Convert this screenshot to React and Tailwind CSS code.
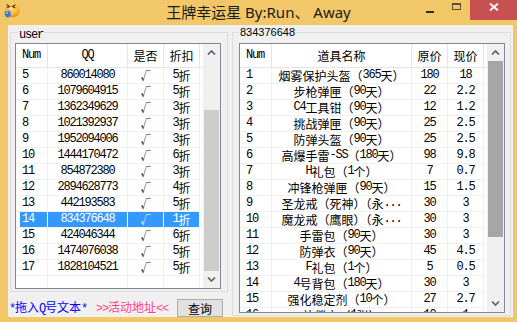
import React from "react";

function Txt({ s }) {
  const parts = s.match(/[\x00-\x7f]+|[^\x00-\x7f]+/g) || [];
  return (
    <>
      {parts.map((p, i) =>
        /^[\x00-\x7f]/.test(p) ? (
          <span key={i} className="font-['Liberation_Mono',monospace] text-[12px] tracking-[-1.2px]">
            {p}
          </span>
        ) : (
          <span key={i} className="font-['Noto_Sans_CJK_SC',sans-serif] text-[12px]">
            {p}
          </span>
        )
      )}
    </>
  );
}

const leftRows = [
  ["5", "860014080", "5折"],
  ["6", "1079604915", "5折"],
  ["7", "1362349629", "3折"],
  ["8", "1021392937", "3折"],
  ["9", "1952094006", "3折"],
  ["10", "1444170472", "6折"],
  ["11", "854872380", "3折"],
  ["12", "2894628773", "4折"],
  ["13", "442193583", "5折"],
  ["14", "834376648", "1折"],
  ["15", "424046344", "6折"],
  ["16", "1474076038", "5折"],
  ["17", "1828104521", "5折"],
];

const rightRows = [
  ["1", "烟雾保护头盔（365天）", "180", "18"],
  ["2", "步枪弹匣（90天）", "22", "2.2"],
  ["3", "C4工具钳（90天）", "12", "1.2"],
  ["4", "挑战弹匣（90天）", "25", "2.5"],
  ["5", "防弹头盔（90天）", "25", "2.5"],
  ["6", "高爆手雷-SS（180天）", "98", "9.8"],
  ["7", "H礼包（1个）", "7", "0.7"],
  ["8", "冲锋枪弹匣（90天）", "15", "1.5"],
  ["9", "圣龙戒（死神）（永...", "30", "3"],
  ["10", "魔龙戒（鹰眼）（永...", "30", "3"],
  ["11", "手雷包（90天）", "30", "3"],
  ["12", "防弹衣（90天）", "45", "4.5"],
  ["13", "F礼包（1个）", "5", "0.5"],
  ["14", "4号背包（180天）", "30", "3"],
  ["15", "强化稳定剂（10个）", "27", "2.7"],
  ["16", "补偿卡（1张）", "10", "1"],
];

function Up() {
  return (
    <svg width="9" height="5" viewBox="0 0 9 5">
      <polyline points="1,4.5 4.5,1 8,4.5" fill="none" stroke="#606060" strokeWidth="1.7" />
    </svg>
  );
}
function Down() {
  return (
    <svg width="9" height="5" viewBox="0 0 9 5">
      <polyline points="1,0.5 4.5,4 8,0.5" fill="none" stroke="#606060" strokeWidth="1.7" />
    </svg>
  );
}

function Icon() {
  return (
    <svg width="17" height="17" viewBox="0 0 17 17">
      <defs>
        <radialGradient id="face" cx="45%" cy="35%" r="65%">
          <stop offset="0" stopColor="#ffe58a" />
          <stop offset="0.65" stopColor="#f8b93c" />
          <stop offset="1" stopColor="#e08a1c" />
        </radialGradient>
      </defs>
      <circle cx="9" cy="9" r="7.6" fill="url(#face)" />
      <path d="M3.5 3.8 L6.6 5.4 L3.8 6.9" stroke="#5a3a12" strokeWidth="1.2" fill="none" />
      <path d="M12.4 3.8 L9.4 5.4 L12.2 6.9" stroke="#5a3a12" strokeWidth="1.2" fill="none" />
      <ellipse cx="6" cy="10.5" rx="1.8" ry="1.2" fill="#f07070" opacity="0.8" />
      <path d="M2.5 10 C1.2 11.5 1.5 15 3.5 16.2 C5.8 16.8 7.6 15.2 8 13.2 L6.5 10.5 Z" fill="#2c7be5" />
      <path d="M3 12.5 L5 11.5" stroke="#ffffff" strokeWidth="0.9" />
    </svg>
  );
}

function Cell({ w, center, sel, children, head }) {
  const border = sel ? "border-white" : head ? "border-[#e5e5e5]" : "border-[#f0f0f0]";
  return (
    <div
      className={`${w} shrink-0 h-full flex items-center whitespace-nowrap overflow-hidden border-r ${border} ${
        center ? "justify-center" : ""
      } ${sel ? "bg-[#3399ff] text-white" : "text-black"}`}
    >
      {children}
    </div>
  );
}

function NumCell({ w, sel, children, head }) {
  const border = sel ? "border-white" : head ? "border-[#e5e5e5]" : "border-[#f0f0f0]";
  return (
    <div className={`${w} shrink-0 h-full flex pl-[4px] border-r ${border}`}>
      <div className={`flex-1 h-full flex items-center pl-[2px] whitespace-nowrap ${sel ? "bg-[#3399ff] text-white" : ""}`}>
        {children}
      </div>
    </div>
  );
}

function Check() {
  return <span className="font-['Noto_Sans_CJK_SC',sans-serif] text-[10px]">√</span>;
}

export default function App() {
  return (
    <div className="w-[517px] h-[322px] bg-[#f1c767] flex flex-col overflow-hidden text-black">
      {/* Title bar */}
      <div className="h-[25px] shrink-0 grid grid-cols-[1fr_auto_1fr]">
        <div className="pl-[3px] pt-[1px]">
          <Icon />
        </div>
        <div className="pt-[2px] text-[15px] leading-[20px] text-[#1a1a1a] whitespace-nowrap font-['Noto_Sans','Noto_Sans_CJK_SC',sans-serif]">
          王牌幸运星 By:Run、 Away
        </div>
        <div className="flex justify-end h-[20px]">
          <div className="w-[26px] h-[20px] flex justify-center pt-[11px]">
            <div className="w-[8px] h-[2px] bg-[#2b2b2b]" />
          </div>
          <div className="w-[27px] h-[20px] flex justify-center pt-[3px]">
            <div className="w-[9px] h-[7px] border border-t-2 border-[#5c4d30]" />
          </div>
          <div className="w-[47px] h-[20px] bg-[#c75050] flex justify-center pt-[3px]">
            <svg width="10" height="8" viewBox="0 0 10 8">
              <path d="M1 0.5 L9 7.5 M9 0.5 L1 7.5" stroke="#ffffff" strokeWidth="1.8" />
            </svg>
          </div>
        </div>
      </div>

      {/* Client area */}
      <div className="ml-[8px] mr-[4px] h-[292px] bg-[#f0f0f0] flex pl-[2px] pr-[2px] gap-[4px] leading-[15px]">
        {/* Left column */}
        <div className="w-[218px] shrink-0 flex flex-col">
          <fieldset className="h-[267px] border border-[#dcdcdc] pl-[4px] pr-[6px] pt-[4px] min-w-0">
            <legend className="ml-[3px] px-[1px] leading-[14px] h-[14px]">
              <Txt s="user" />
            </legend>
            <div className="w-[206px] h-[246px] border border-[#828790] bg-white flex">
              <div className="w-[187px] flex flex-col overflow-hidden">
                <div className="h-[24px] shrink-0 flex border-b border-[#e5e5e5]">
                  <NumCell w="w-[32px]" head>
                    <Txt s="Num" />
                  </NumCell>
                  <Cell w="w-[80px]" center head>
                    <Txt s="QQ" />
                  </Cell>
                  <Cell w="w-[36px]" center head>
                    <Txt s="是否" />
                  </Cell>
                  <Cell w="w-[36px]" center head>
                    <Txt s="折扣" />
                  </Cell>
                </div>
                {leftRows.map((r) => {
                  const sel = r[0] === "14";
                  return (
                    <div key={r[0]} className="h-[16px] shrink-0 flex border-b border-[#f0f0f0]">
                      <NumCell w="w-[32px]" sel={sel}>
                        <Txt s={r[0]} />
                      </NumCell>
                      <Cell w="w-[80px]" center sel={sel}>
                        <Txt s={r[1]} />
                      </Cell>
                      <Cell w="w-[36px]" center sel={sel}>
                        <Check />
                      </Cell>
                      <Cell w="w-[36px]" center sel={sel}>
                        <Txt s={r[2]} />
                      </Cell>
                    </div>
                  );
                })}
                <div className="flex-1 flex">
                  <div className="w-[32px] border-r border-[#f0f0f0]" />
                  <div className="w-[80px] border-r border-[#f0f0f0]" />
                  <div className="w-[36px] border-r border-[#f0f0f0]" />
                  <div className="w-[36px] border-r border-[#f0f0f0]" />
                </div>
              </div>
              <div className="w-[17px] flex flex-col bg-[#f0f0f0]">
                <div className="h-[17px] flex items-center justify-center">
                  <Up />
                </div>
                <div className="flex-1 flex flex-col">
                  <div className="h-[49px]" />
                  <div className="flex-1 mx-[1px] bg-[#cdcdcd]" />
                </div>
                <div className="h-[17px] flex items-center justify-center">
                  <Down />
                </div>
              </div>
            </div>
          </fieldset>
          <div className="mt-[7px] h-[18px] flex items-center">
            <div className="-ml-[1px] text-[#0000ff] whitespace-nowrap">
              <Txt s="*拖入Q号文本*" />
            </div>
            <div className="ml-[9px] text-[#ff4485] whitespace-nowrap">
              <Txt s=">>活动地址<<" />
            </div>
            <button className="ml-auto mr-[5px] w-[46px] h-[18px] border border-[#adadad] bg-[#e1e1e1] flex items-center justify-center leading-[15px]">
              <Txt s="查询" />
            </button>
          </div>
        </div>

        {/* Right column */}
        <fieldset className="flex-1 h-[291px] border border-[#dcdcdc] pl-[6px] pr-[5px] pt-[4px] min-w-0">
          <legend className="px-[1px] leading-[14px] h-[14px] text-[11px] font-['Liberation_Sans',sans-serif]">
            834376648
          </legend>
          <div className="w-[266px] h-[270px] border border-[#828790] bg-white flex">
            <div className="w-[247px] flex flex-col overflow-hidden">
              <div className="h-[24px] shrink-0 flex border-b border-[#e5e5e5]">
                <NumCell w="w-[32px]" head>
                  <Txt s="Num" />
                </NumCell>
                <Cell w="w-[140px]" center head>
                  <Txt s="道具名称" />
                </Cell>
                <Cell w="w-[36px]" center head>
                  <Txt s="原价" />
                </Cell>
                <Cell w="w-[36px]" center head>
                  <Txt s="现价" />
                </Cell>
              </div>
              {rightRows.map((r) => (
                <div key={r[0]} className="h-[16px] shrink-0 flex border-b border-[#f0f0f0]">
                  <NumCell w="w-[32px]">
                    <Txt s={r[0]} />
                  </NumCell>
                  <Cell w="w-[140px]" center>
                    <Txt s={r[1]} />
                  </Cell>
                  <Cell w="w-[36px]" center>
                    <Txt s={r[2]} />
                  </Cell>
                  <Cell w="w-[36px]" center>
                    <Txt s={r[3]} />
                  </Cell>
                </div>
              ))}
            </div>
            <div className="w-[17px] flex flex-col bg-[#f0f0f0]">
              <div className="h-[17px] shrink-0 flex items-center justify-center">
                <Up />
              </div>
              <div className="flex-1 flex flex-col">
                <div className="h-[176px] mx-[1px] bg-[#a6a6a6]" />
                <div className="flex-1" />
              </div>
              <div className="h-[17px] shrink-0 flex items-center justify-center">
                <Down />
              </div>
            </div>
          </div>
        </fieldset>
      </div>
    </div>
  );
}
